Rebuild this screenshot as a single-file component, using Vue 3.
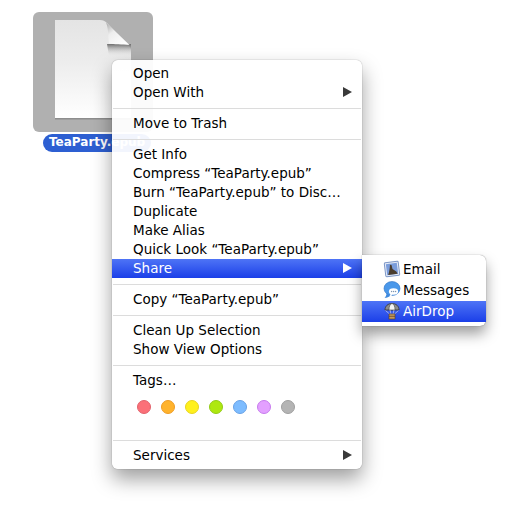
<script setup>
const groups = [
  [{ label: 'Open' }, { label: 'Open With', arrow: true }],
  [{ label: 'Move to Trash' }],
  [
    { label: 'Get Info' },
    { label: 'Compress “TeaParty.epub”' },
    { label: 'Burn “TeaParty.epub” to Disc…' },
    { label: 'Duplicate' },
    { label: 'Make Alias' },
    { label: 'Quick Look “TeaParty.epub”' },
    { label: 'Share', arrow: true, active: true }
  ],
  [{ label: 'Copy “TeaParty.epub”' }],
  [{ label: 'Clean Up Selection' }, { label: 'Show View Options' }]
]

const tags = [
  { fill: '#fb7078', ring: '#e2626c' },
  { fill: '#ffb32c', ring: '#ee9c25' },
  { fill: '#fff01c', ring: '#e8d420' },
  { fill: '#aee80f', ring: '#93cb18' },
  { fill: '#7dbcff', ring: '#68a2e6' },
  { fill: '#e3a0ff', ring: '#c77bee' },
  { fill: '#b4b4b4', ring: '#9f9f9f' }
]
</script>

<template>
  <div class="desktop">
    <div class="file">
      <div class="tile">
        <svg class="doc" width="78" height="102" viewBox="0 0 78 102">
          <defs>
            <linearGradient id="paper" x1="0" y1="0" x2="0" y2="1">
              <stop offset="0" stop-color="#e4e4e4" />
              <stop offset="0.4" stop-color="#ececec" />
              <stop offset="1" stop-color="#ffffff" />
            </linearGradient>
            <linearGradient id="fold" x1="0" y1="0" x2="0.8" y2="1">
              <stop offset="0" stop-color="#a8a8a8" />
              <stop offset="0.4" stop-color="#eeeeee" />
              <stop offset="1" stop-color="#ffffff" />
            </linearGradient>
            <linearGradient id="crease" x1="0" y1="0" x2="0" y2="1">
              <stop offset="0" stop-color="#6e6e6e" />
              <stop offset="1" stop-color="#e9e9e9" stop-opacity="0" />
            </linearGradient>
          </defs>
          <path d="M1 0H46C49 0 51 1 53 3L76 27C77 28 77 29 77 31V98H1Z" fill="#7f7f7f" transform="translate(0 1.5)" opacity="0.7" />
          <path d="M1 0H46C49 0 51 1 53 3L76 27C77 28 77 29 77 31V98H1Z" fill="url(#paper)" />
          <path d="M53 24H77V36H55Z" fill="url(#crease)" />
          <path d="M52 2.500C55 10 54 18 55 23.500C60 24.500 68 24.500 75.500 25Z" fill="url(#fold)" />
        </svg>
      </div>
      <div class="name">TeaParty.epub</div>
    </div>

    <div class="menu">
      <template v-for="(group, i) in groups" :key="i">
        <div v-for="item in group" :key="item.label" class="row" :class="{ active: item.active }">
          <span>{{ item.label }}</span>
          <i v-if="item.arrow" class="arrow"></i>
        </div>
        <div class="sep"></div>
      </template>
      <div class="row">Tags…</div>
      <div class="tags">
        <span
          v-for="tag in tags"
          :key="tag.fill"
          class="dot"
          :style="{ background: tag.fill, borderColor: tag.ring }"
        ></span>
      </div>
      <div class="sep"></div>
      <div class="row">
        <span>Services</span>
        <i class="arrow"></i>
      </div>

      <div class="submenu">
        <div class="sub-row">
          <svg width="18" height="18" viewBox="0 0 18 18">
            <g transform="rotate(-7 9 9)">
              <rect x="2" y="2" width="14" height="14" rx="1" fill="#e6ecf7" stroke="#7d97c6" />
              <rect x="3.500" y="3.500" width="11" height="11" fill="#7b9ddb" />
              <path d="M4.500 14.500C6 11 7 8 7.500 4.500L9 5L9.500 9L13 12L14 14.500Z" fill="#4a3d2e" />
            </g>
          </svg>
          <span>Email</span>
        </div>
        <div class="sub-row">
          <svg width="18" height="18" viewBox="0 0 18 18">
            <ellipse cx="9" cy="7.500" rx="8" ry="7" fill="#4a98ea" stroke="#2e72c4" stroke-width="0.6" />
            <path d="M3.500 12C3.500 14.500 2.500 16 1.500 17C4 17 6 16 7.500 14.500Z" fill="#3f8ade" />
            <ellipse cx="10.500" cy="10.500" rx="4.600" ry="3.300" fill="#fff" />
            <path d="M7.500 12.500C7.500 13.500 7 14.500 6.500 15C8 15 9 14.500 9.500 13.500Z" fill="#fff" />
            <circle cx="8.600" cy="10.500" r="0.700" fill="#7e97b2" />
            <circle cx="10.600" cy="10.500" r="0.700" fill="#7e97b2" />
            <circle cx="12.600" cy="10.500" r="0.700" fill="#7e97b2" />
          </svg>
          <span>Messages</span>
        </div>
        <div class="sub-row active">
          <svg width="18" height="18" viewBox="0 0 18 18">
            <path d="M2 8C2 4 5 1.500 9 1.500C13 1.500 16 4 16 8Z" fill="#8c8c8c" stroke="#333" stroke-width="0.8" />
            <path d="M6 8C6 4.500 7 2 9 1.500C11 2 12 4.500 12 8Z" fill="#f4f4f4" stroke="#444" stroke-width="0.6" />
            <path d="M2.500 8.500L6.500 12M15.500 8.500L11.500 12M7 8L8 12M11 8L10 12" stroke="#e8e8e8" stroke-width="0.6" fill="none" />
            <rect x="6" y="12" width="6" height="5" fill="#c49a62" stroke="#5b3c1d" stroke-width="0.6" />
            <path d="M6 14.300H12" stroke="#5b3c1d" stroke-width="0.7" />
          </svg>
          <span>AirDrop</span>
        </div>
      </div>
    </div>
  </div>
</template>

<style>
html,
body {
  background: #fff;
}
</style>

<style scoped>
.desktop {
  position: relative;
  width: 528px;
  height: 505px;
  overflow: hidden;
  font-family: "DejaVu Sans", sans-serif;
  font-size: 13.5px;
  color: #000;
}

.file {
  display: flex;
  flex-direction: column;
  align-items: flex-start;
  padding: 12px 0 0 33px;
}

.tile {
  display: flex;
  justify-content: center;
  width: 120px;
  height: 120px;
  padding-top: 8px;
  box-sizing: border-box;
  background: #b0b0b0;
  border-radius: 6px;
}

.name {
  margin: 2px 0 0 10px;
  height: 18px;
  line-height: 17px;
  padding: 0 6px;
  border-radius: 9px;
  background: #2d5fd2;
  color: #fff;
  font-size: 12px;
  font-weight: 700;
}

.menu {
  position: absolute;
  left: 112px;
  top: 60px;
  width: 250px;
  padding: 4px 0;
  box-sizing: border-box;
  background: rgba(255, 255, 255, 0.94);
  border-radius: 6px;
  box-shadow: 0 0 1px rgba(0, 0, 0, 0.55), 0 10px 20px rgba(0, 0, 0, 0.38);
}

.row {
  display: flex;
  align-items: center;
  justify-content: space-between;
  height: 19px;
  box-sizing: border-box;
  padding: 0 10px 2px 21px;
  white-space: nowrap;
}

.row.active,
.sub-row.active {
  background: linear-gradient(#4e74f6, #1b3fe8);
  color: #fff;
}

.arrow {
  width: 0;
  height: 0;
  border-left: 9px solid #3a3a3a;
  border-top: 5px solid transparent;
  border-bottom: 5px solid transparent;
}

.active .arrow {
  border-left-color: #fff;
}

.sep {
  height: 1px;
  margin: 6px 1px 5px;
  background: #dcdcdc;
}

.tags {
  display: flex;
  gap: 10px;
  padding: 10px 0 0 25px;
  height: 44px;
  box-sizing: border-box;
}

.dot {
  width: 14px;
  height: 14px;
  box-sizing: border-box;
  border: 1px solid;
  border-radius: 50%;
}

.submenu {
  position: absolute;
  left: 250px;
  top: 195px;
  width: 124px;
  padding: 4px 0;
  box-sizing: border-box;
  background: #fff;
  border-radius: 0 6px 6px 0;
  box-shadow: 0 0 1px rgba(0, 0, 0, 0.55), 0 8px 14px rgba(0, 0, 0, 0.38);
}

.sub-row {
  display: flex;
  align-items: center;
  gap: 2px;
  height: 21px;
  box-sizing: border-box;
  padding: 0 0 1px 21px;
}

.sub-row span {
  margin-bottom: 1px;
}
</style>
